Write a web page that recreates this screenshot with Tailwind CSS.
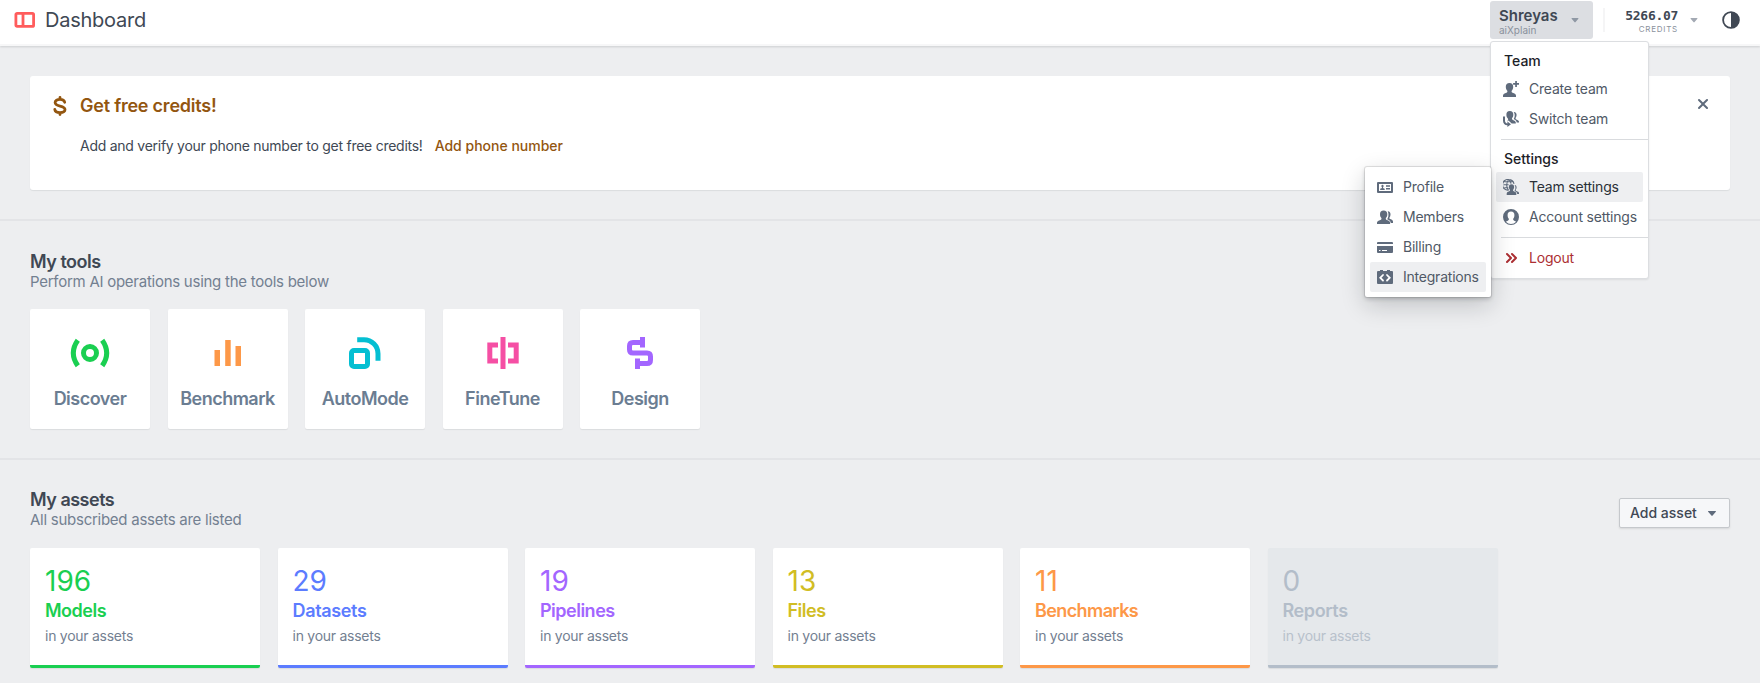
<!DOCTYPE html>
<html lang="en">
<head>
<meta charset="utf-8">
<title>Dashboard</title>
<script src="https://cdn.jsdelivr.net/npm/@tailwindcss/browser@4"></script>
</head>
<body class="relative h-[683px] w-[1760px] overflow-hidden bg-[#edeef0] font-['Inter',sans-serif] text-sm text-[#404854]">

<header class="relative flex h-[46px] items-start justify-between border-b-2 border-[#f7f7f8] bg-white shadow-[0_1px_2px_rgba(17,20,24,0.14)]">
  <div class="flex h-10 items-center pl-3">
    <svg class="size-6" viewBox="0 0 24 24" fill="none" stroke="#ff5c5c" stroke-width="2.8"><rect x="3.9" y="5.4" width="17.700" height="13" rx="1.2"/><path d="M11 5v14"/></svg>
    <h1 class="ml-[9px] text-[20px] leading-6 tracking-[-0.25px] text-[#404854]">Dashboard</h1>
  </div>
  <div class="flex h-10 items-start">
    <button class="mt-px flex h-[38px] w-[103px] items-center justify-between rounded-[3px] bg-[#dcdee2] pr-2.5 pl-[9px] text-left">
      <span class="flex flex-col">
        <span class="mt-px text-[15px] leading-[18px] font-semibold text-[#404854]">Shreyas</span>
        <span class="text-[10px] leading-[10px] text-[#8a919c]">aiXplain</span>
      </span>
      <svg class="size-4" viewBox="0 0 16 16" fill="#8f98a4"><path d="M11.500 6.500c0-.28-.22-.5-.5-.5H5a.495.495 0 00-.37.83l3 3.500c.09.1.22.17.37.17s.28-.07.37-.17l3-3.500c.08-.09.13-.2.13-.33z"/></svg>
    </button>
    <div class="mt-2 ml-[10px] h-6 w-0.5 bg-[#f5f5f6]"></div>
    <div class="mt-[9px] ml-5 flex w-[53px] flex-col items-end">
      <span class="font-['DejaVu_Sans_Mono',monospace] text-[13px] leading-[14px] font-bold tracking-[-0.3px] text-[#404854]">5266.07</span>
      <span class="mt-px text-[8px] leading-[10px] tracking-[0.75px] text-[#8a919c]">CREDITS</span>
    </div>
    <svg class="mt-3 ml-2 size-4" viewBox="0 0 16 16" fill="#a3a9b3"><path d="M11.500 6.500c0-.28-.22-.5-.5-.5H5a.495.495 0 00-.37.83l3 3.500c.09.1.22.17.37.17s.28-.07.37-.17l3-3.500c.08-.09.13-.2.13-.33z"/></svg>
    <svg class="mt-[11px] mr-5 ml-[20px] size-[18px]" viewBox="0 0 18 18"><circle cx="9" cy="9" r="7.900" fill="none" stroke="#404854" stroke-width="1.800"/><path d="M9 1a8 8 0 010 16z" fill="#404854"/></svg>
  </div>
</header>

<main>
  <section class="h-[175px] border-b-2 border-[#e3e4e7] px-[30px] pt-[30px]">
    <div class="flex h-[114px] items-start rounded-[3px] bg-white pl-5 shadow-[0_1px_1px_rgba(17,20,24,0.08)]">
      <svg class="mt-5 size-5" viewBox="0 0 20 20" fill="none" stroke="#935610" stroke-width="2.800" stroke-linecap="round"><path d="M14.700 6.300C14.300 4.400 12.600 3.400 10 3.400 7.200 3.400 5.100 4.600 5.100 6.600c0 4.700 9.900 2.200 9.900 7 0 1.900-2 3-5 3s-4.900-1.100-5.200-3.100M10 1.400v1.500M10 17v1.600"/></svg>
      <div class="ml-[10px]">
        <h2 class="mt-[18px] text-[18px] leading-6 font-semibold tracking-[-0.22px] text-[#935610]">Get free credits!</h2>
        <p class="mt-[18px] text-sm leading-5 tracking-[-0.26px]">Add and verify your phone number to get free credits!<a class="ml-3 font-medium tracking-normal text-[#935610]">Add phone number</a></p>
      </div>
      <svg class="mt-5 mr-[19px] ml-auto size-4" viewBox="0 0 16 16" fill="#5f6b7c"><path d="M9.41 8l3.29-3.29c.19-.18.3-.43.3-.71a1.003 1.003 0 00-1.71-.71L8 6.590l-3.29-3.300a1.003 1.003 0 00-1.420 1.420L6.590 8 3.300 11.290c-.19.180-.3.430-.3.710a1.003 1.003 0 001.710.710L8 9.410l3.290 3.290c.180.190.430.300.710.300a1.003 1.003 0 00.710-1.710L9.410 8z"/></svg>
    </div>
  </section>

  <section class="h-[239px] border-b-2 border-[#e3e4e7] px-[30px] pt-[30px]">
    <h2 class="text-[18px] leading-[21px] font-semibold tracking-[-0.5px]">My tools</h2>
    <p class="text-[15px] leading-[19px] tracking-[-0.26px] text-[#738091]">Perform AI operations using the tools below</p>
    <div class="mt-[18px] flex gap-[17.5px] text-[18px] leading-6 font-semibold tracking-[-0.5px] text-[#6b7d92]">
      <div class="flex size-[120px] flex-col items-center rounded-[2px] bg-white pt-6 shadow-[0_1px_1px_rgba(17,20,24,0.08)]">
        <svg class="size-10" viewBox="0 0 40 40" fill="none" stroke="#1acf51" stroke-width="5"><circle cx="20" cy="20" r="6.500"/><path d="M7.800 7.300Q-1.200 20 7.800 32.700M32.200 7.300Q41.200 20 32.200 32.700"/></svg>
        <span class="mt-[14px]">Discover</span>
      </div>
      <div class="flex size-[120px] flex-col items-center rounded-[2px] bg-white pt-6 shadow-[0_1px_1px_rgba(17,20,24,0.08)]">
        <svg class="size-10" viewBox="0 0 40 40" fill="#fd9848"><path d="M6.500 17H12v16H6.500zM17.200 7h5.500v26h-5.500zM27.500 13H33v20h-5.500z"/></svg>
        <span class="mt-[14px]">Benchmark</span>
      </div>
      <div class="flex size-[120px] flex-col items-center rounded-[2px] bg-white pt-6 shadow-[0_1px_1px_rgba(17,20,24,0.08)]">
        <svg class="size-10" viewBox="0 0 40 40" fill="none" stroke="#04bfd2" stroke-width="5"><rect x="6.500" y="17.500" width="16" height="16" rx="2.500"/><path d="M12.200 6.700H19a14 14 0 0114 14v7"/></svg>
        <span class="mt-[14px]">AutoMode</span>
      </div>
      <div class="flex size-[120px] flex-col items-center rounded-[2px] bg-white pt-6 shadow-[0_1px_1px_rgba(17,20,24,0.08)]">
        <svg class="size-10" viewBox="0 0 40 40" fill="none" stroke="#f54fa4" stroke-width="5"><path d="M20 4v32M15 12H6.800v16H15M25 12h8.200v16H25"/></svg>
        <span class="mt-[14px]">FineTune</span>
      </div>
      <div class="flex size-[120px] flex-col items-center rounded-[2px] bg-white pt-6 shadow-[0_1px_1px_rgba(17,20,24,0.08)]">
        <svg class="size-10" viewBox="0 0 40 40" fill="none" stroke="#a366ff" stroke-width="5"><path d="M22.500 4v10.500M22.500 9.500H13q-3.500 0-3.500 3.500v3.500q0 3.500 3.500 3.500h14q3.500 0 3.500 3.500V27q0 3.500-3.500 3.500h-9.500M17.500 25.500V36"/></svg>
        <span class="mt-[14px]">Design</span>
      </div>
    </div>
  </section>

  <section class="px-[30px] pt-[29px]">
    <div class="flex items-start justify-between">
      <div>
        <h2 class="text-[18px] leading-[21px] font-semibold tracking-[-0.5px]">My assets</h2>
        <p class="text-[15px] leading-[19px] tracking-[-0.26px] text-[#738091]">All subscribed assets are listed</p>
      </div>
      <button class="mt-[9px] flex h-[30px] w-[111px] items-center justify-between rounded-[2px] border border-[#c5c8cc] bg-[#f6f7f9] pr-[9px] pl-2.5 text-sm font-medium shadow-[0_1px_2px_rgba(17,20,24,0.1)]">Add asset
        <svg class="size-4" viewBox="0 0 16 16" fill="#5f6b7c"><path d="M12 6.5c0-.28-.22-.5-.5-.5h-7a.495.495 0 00-.37.83l3.5 4c.09.1.22.17.37.17s.28-.07.37-.17l3.5-4c.08-.09.13-.2.13-.33z"/></svg>
      </button>
    </div>
    <div class="mt-[19px] flex gap-[17.5px]">
      <div class="h-[120px] w-[230px] rounded-[2px] border-b-3 border-[#1acf51] bg-white px-[15px] pt-[15px] text-[#1acf51] shadow-[0_1px_1px_rgba(17,20,24,0.08)]">
        <div class="text-[28px] leading-9">196</div><div class="text-[18px] leading-6 font-semibold tracking-[-0.5px]">Models</div><div class="mt-[3px] text-sm leading-5 tracking-[-0.26px] text-[#738091]">in your assets</div>
      </div>
      <div class="h-[120px] w-[230px] rounded-[2px] border-b-3 border-[#5c7cff] bg-white px-[15px] pt-[15px] text-[#5c7cff] shadow-[0_1px_1px_rgba(17,20,24,0.08)]">
        <div class="text-[28px] leading-9">29</div><div class="text-[18px] leading-6 font-semibold tracking-[-0.35px]">Datasets</div><div class="mt-[3px] text-sm leading-5 tracking-[-0.26px] text-[#738091]">in your assets</div>
      </div>
      <div class="h-[120px] w-[230px] rounded-[2px] border-b-3 border-[#a366ff] bg-white px-[15px] pt-[15px] text-[#a366ff] shadow-[0_1px_1px_rgba(17,20,24,0.08)]">
        <div class="text-[28px] leading-9">19</div><div class="text-[18px] leading-6 font-semibold tracking-[-0.5px]">Pipelines</div><div class="mt-[3px] text-sm leading-5 tracking-[-0.26px] text-[#738091]">in your assets</div>
      </div>
      <div class="h-[120px] w-[230px] rounded-[2px] border-b-3 border-[#d1bd24] bg-white px-[15px] pt-[15px] text-[#d1bd24] shadow-[0_1px_1px_rgba(17,20,24,0.08)]">
        <div class="text-[28px] leading-9">13</div><div class="text-[18px] leading-6 font-semibold tracking-[-0.5px]">Files</div><div class="mt-[3px] text-sm leading-5 tracking-[-0.26px] text-[#738091]">in your assets</div>
      </div>
      <div class="h-[120px] w-[230px] rounded-[2px] border-b-3 border-[#fd9848] bg-white px-[15px] pt-[15px] text-[#fd9848] shadow-[0_1px_1px_rgba(17,20,24,0.08)]">
        <div class="text-[28px] leading-9">11</div><div class="text-[18px] leading-6 font-semibold tracking-[-0.6px]">Benchmarks</div><div class="mt-[3px] text-sm leading-5 tracking-[-0.26px] text-[#738091]">in your assets</div>
      </div>
      <div class="h-[120px] w-[230px] rounded-[2px] border-b-3 border-[#b3bdc9] bg-[#e5e8eb] px-[15px] pt-[15px] text-[#b3bdc9] shadow-[0_1px_1px_rgba(17,20,24,0.08)]">
        <div class="text-[28px] leading-9">0</div><div class="text-[18px] leading-6 font-semibold tracking-[-0.4px]">Reports</div><div class="mt-[3px] text-sm leading-5 tracking-[-0.26px] text-[#b8c1cb]">in your assets</div>
      </div>
    </div>
  </section>
</main>

<!-- Account menu -->
<nav class="absolute top-[41px] left-[1490px] h-[238px] w-[159px] rounded-[3px] border border-[#dcdee1] bg-white pt-1 tracking-[-0.2px] text-[#505966] shadow-[0_1px_2px_rgba(17,20,24,0.08)]">
  <h3 class="pt-[5px] pl-[13px] text-sm leading-[20px] font-medium tracking-normal text-[#1c2127]">Team</h3>
  <a class="mx-[5px] mt-[3px] flex h-[30px] items-center gap-[10px] pl-[7px]">
    <svg class="size-4" viewBox="0 0 16 16" fill="#5f6b7c"><path d="M6.500 2C8.900 2 10.300 3.600 10.200 5.800c0 1.700-.6 3.100-1.500 4-.3.900 0 1.600.9 2 1.800.7 3.200 1.200 3.400 2.600V16H0v-1.600c.2-1.400 1.600-1.900 3.400-2.600.9-.4 1.200-1.100.9-2-.9-.9-1.500-2.300-1.500-4C2.700 3.600 4.100 2 6.500 2zM12.200 0h1.700v2.100H16v1.700h-2.100v2.100h-1.700V3.800h-2.100V2.100h2.100z"/></svg>Create team</a>
  <a class="mx-[5px] flex h-[30px] items-center gap-[10px] pl-[7px]">
    <svg class="size-4" viewBox="0 0 16 16" fill="#5f6b7c"><path d="M6.800 0c2.400 0 3.600 1.500 3.500 3.700 0 1.400-.5 2.600-1.200 3.300-.3.900 0 1.500.8 1.900 1.600.7 2.700 1.200 2.900 2.600v1H8.700L5.500 9.600 4.200 10.500C5 8.800 5.600 8.600 4.700 7.200 3.800 6.400 3.400 5.100 3.400 3.700 3.300 1.500 4.400 0 6.800 0zM10.700 1c2-.1 3 1.300 2.900 3.100 0 1.100-.4 2-.9 2.600-.3.800 0 1.400.7 1.700 1.500.7 2.500 1.100 2.600 2.400v.8h-2.200c-.3-1.900-1.300-2.700-2.900-3.400-.2-.4 0-.8.300-1.200.8-1.700.8-4.200-.5-6zM0 5.600h2v4.200c0 1.600.9 2.500 2.400 2.600V10.500L8 13.300 4.400 16v-1.700C1.700 14.200 0 12.500 0 9.800z"/></svg>Switch team</a>
  <div class="mt-[5px] ml-[10px] border-t border-[#d9dbde]"></div>
  <h3 class="mt-[4px] pt-[5px] pl-[13px] text-sm leading-[20px] font-medium tracking-normal text-[#1c2127]">Settings</h3>
  <a class="mx-[5px] mt-[3px] flex h-[30px] items-center gap-[10px] rounded-[2px] bg-[#eeeff1] pl-[7px] text-[#2a3037]">
    <svg class="size-4" viewBox="0 0 16 16"><path d="M5.800.6a5.300 5.300 0 100 10.400M5.800.6a5.300 5.300 0 015.200 4.200M.6 5.800h5M1.400 2.800h8.800M1.300 8.700h4M5.800.6C3 2.500 3 9 5.600 11M5.800.6c1.200.9 2 2.500 2.200 4" fill="none" stroke="#5f6b7c" stroke-width="1.100"/><path fill="#5f6b7c" d="M8.500 5.200c1.800 0 2.700 1.200 2.600 2.800 0 1.200-.4 2.200-1 2.800-.2.700 0 1.200.7 1.500 1.400.6 2.400.9 2.500 2.200V16H3.700v-1.500c.1-1.300 1.100-1.600 2.500-2.200.7-.3.900-.8.700-1.500-.6-.6-1-1.600-1-2.800-.1-1.600.8-2.800 2.600-2.800zM11.600 5.900c1.400.2 2.100 1.200 2 2.600 0 .9-.3 1.600-.8 2.100-.2.700 0 1.200.6 1.400 1.500.6 2.500 1 2.600 2v1h-1.800c-.2-1.800-1.300-2.500-2.600-3 0-.3.100-.6.300-.9.700-1.300.9-3.600-.3-5.200z"/></svg>Team settings</a>
  <a class="mx-[5px] flex h-[30px] items-center gap-[10px] pl-[7px] whitespace-nowrap">
    <svg class="size-4" viewBox="0 0 16 16" fill="#5f6b7c"><path fill-rule="evenodd" d="M8 0a8 8 0 110 16A8 8 0 018 0zm0 2.400c-2.400 0-3.500 1.600-3.400 3.800 0 1.600.4 2.700 1.200 3.500.3 1-.1 1.600-1 2-.8.300-1.400.6-1.900 1a6.900 6.900 0 0010.200 0c-.5-.4-1.100-.7-1.900-1-.9-.4-1.300-1-1-2 .8-.8 1.200-1.900 1.200-3.500.1-2.200-1-3.800-3.400-3.800z"/></svg>Account settings</a>
  <div class="mt-[5px] ml-[10px] border-t border-[#d9dbde]"></div>
  <a class="mx-[5px] mt-[5px] flex h-[30px] items-center gap-[10px] pl-[7px] text-[#ac2f33]">
    <svg class="size-4" viewBox="0 0 16 16" fill="none" stroke="#ac2f33" stroke-width="2" stroke-linecap="round" stroke-linejoin="round"><path d="M4 4l4 4-4 4M9 4l4 4-4 4"/></svg>Logout</a>
</nav>

<!-- Team settings submenu -->
<nav class="absolute top-[167px] left-[1365px] h-[130px] w-[126px] rounded-[2px] bg-white p-[5px] tracking-[-0.22px] text-[#505966] shadow-[0_0_0_1px_rgba(17,20,24,0.1),0_2px_4px_rgba(17,20,24,0.2),0_8px_24px_rgba(17,20,24,0.2)]">
  <a class="flex h-[30px] items-center gap-[10px] pl-[7px]">
    <svg class="size-4" viewBox="0 0 16 16" fill="#5f6b7c"><path fill-rule="evenodd" d="M1 3h14q1 0 1 1v9q0 1-1 1H1q-1 0-1-1V4q0-1 1-1zm1 2v7h12V5z"/><path d="M5.500 5.800c1.200 0 1.500 1.800.5 2.700v.6l1.700.7v1.100H3.200V9.800L5 9.100v-.6C4 7.600 4.300 5.800 5.500 5.800zM9 6.200h4v1.500H9zM9 9h4v1.500H9z"/></svg>Profile</a>
  <a class="flex h-[30px] items-center gap-[10px] pl-[7px]">
    <svg class="size-4" viewBox="0 0 16 16" fill="#5f6b7c"><path d="M6.600 1.500C9 1.500 10.400 3 10.300 5.300c0 1.600-.5 2.900-1.400 3.800-.3 1 .1 1.600 1 2 1.900.8 3 1.200 3.200 2.500V15H0v-1.400c.2-1.300 1.500-1.700 3.400-2.500.9-.4 1.300-1 1-2-.9-.9-1.400-2.200-1.400-3.800C2.900 3 4.200 1.500 6.600 1.500zM10.700 2.300c1.900-.1 2.900 1.300 2.800 3.200 0 1.200-.4 2.200-1 2.900-.2.800 0 1.400.8 1.700 1.700.8 2.600 1.200 2.700 2.400V14h-2.200c-.2-1.900-1.400-2.700-3.400-3.500-.2-.4 0-.8.300-1.200 1-1.700 1.100-5 0-7z"/></svg>Members</a>
  <a class="flex h-[30px] items-center gap-[10px] pl-[7px]">
    <svg class="size-4" viewBox="0 0 16 16" fill="#5f6b7c"><path fill-rule="evenodd" d="M1 3h14q1 0 1 1v1H0V4q0-1 1-1zM0 7h16v6q0 1-1 1H1q-1 0-1-1zm2 4v1h1.500v-1zm3 0v1h5v-1z"/></svg>Billing</a>
  <a class="flex h-[30px] items-center gap-[10px] rounded-[2px] bg-[#eeeff1] pl-[7px]">
    <svg class="size-4" viewBox="0 0 16 16" fill="#5f6b7c"><path d="M3 2V1h3v1h4V1h3v1h2q1 0 1 1v11q0 1-1 1H1q-1 0-1-1V3q0-1 1-1z"/><path d="M6 6L3.300 8.800 6 11.500M10 6l2.700 2.800L10 11.500" fill="none" stroke="#fff" stroke-width="1.800" stroke-linecap="round"/></svg>Integrations</a>
</nav>
</body>
</html>
